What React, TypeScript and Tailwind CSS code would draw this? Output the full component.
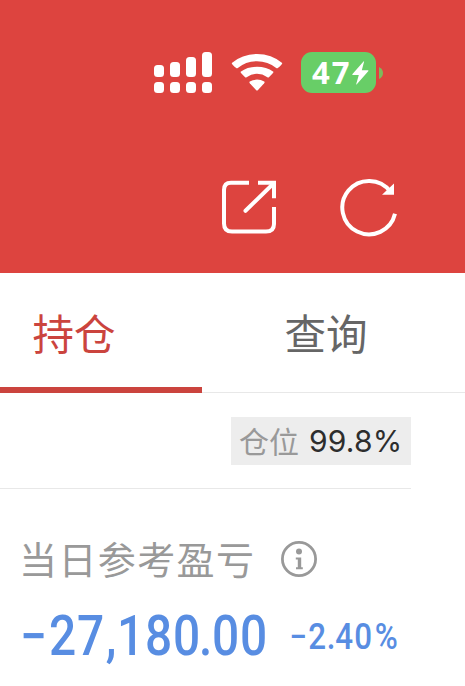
import React from "react";

const cjk = "font-['Noto_Sans_CJK_SC',sans-serif]";

function SignalIcon() {
  const bars = [
    { x: 0, y: 13, h: 12 },
    { x: 16, y: 10, h: 15 },
    { x: 32, y: 5, h: 20 },
    { x: 48, y: 0, h: 25 },
  ];
  return (
    <svg width="58" height="41" viewBox="0 0 58 41" fill="white">
      {bars.map((b) => (
        <g key={b.x}>
          <rect x={b.x} y={b.y} width="10" height={b.h} rx="3.5" />
          <rect x={b.x} y="30" width="10" height="11" rx="3.5" />
        </g>
      ))}
    </svg>
  );
}

function WifiIcon() {
  return (
    <svg width="52" height="39" viewBox="0 1 52 39" fill="white">
      <path d="M.8 11Q11.5 2 26 2T51.2 11Q51.6 11.7 46.8 16.1Q46 16.5 45.2 16Q37 9.2 26 9.2T6.8 16Q6 16.5 5.2 16.1Q.4 11.7 .8 11Z" />
      <path d="M9.6 19.8Q16.5 14.8 26 14.8T42.4 19.8Q43 20.6 37.9 25.2Q37.2 25.7 36.4 25.2Q31.5 21.8 26 21.8T15.6 25.2Q14.8 25.7 14.1 25.2Q9 20.6 9.6 19.8Z" />
      <path d="M18.8 29.6Q22 27.6 26 27.6T33.2 29.6Q34 30.3 33.2 31.2L27 37.9Q26 38.9 25 37.9L18.8 31.2Q18 30.3 18.8 29.6Z" />
    </svg>
  );
}

function Battery() {
  return (
    <div className="flex items-center gap-[3px]">
      <div className="flex h-[41px] w-[75px] items-center rounded-[11px] bg-[#68ce67] pl-[11px] text-white">
        <span className="w-[40px] font-['Noto_Sans',sans-serif] text-[31px] leading-[41px] font-bold tracking-[2px]">47</span>
        <svg width="17" height="24" viewBox="0 0 17 24" fill="white">
          <path d="M11.5.5Q12.4-.3 12 .9L9.8 9.2H15.8Q17 9.3 16.2 10.3L4.8 23.2Q3.9 24 4.3 22.8L6.8 14H.9Q-.2 13.9.5 12.9Z" />
        </svg>
      </div>
      <svg width="4" height="12" viewBox="0 0 4 12" fill="#7db95b"><path d="M0 0Q4 2 4 6T0 12Z" /></svg>
    </div>
  );
}

function ShareIcon() {
  return (
    <svg width="58" height="58" viewBox="0 0 58 58" fill="none" stroke="white" strokeWidth="4">
      <path d="M29 4.8H11Q4 4.8 4 12V45.5Q4 53.5 12 53.5H46Q54 53.5 54 46V29" />
      <path d="M38 4.8H54V20.3" />
      <path d="M53 6L25.5 32.8" strokeLinecap="round" />
    </svg>
  );
}

function RefreshIcon() {
  return (
    <svg width="60" height="60" viewBox="0 0 60 60" fill="none" stroke="white" strokeWidth="4">
      <path d="M57 36.8A26.7 26.7 0 1 1 52.3 14.5" />
      <path d="M56 6.5V17.8H44Z" fill="white" stroke="none" />
    </svg>
  );
}

function InfoIcon() {
  return (
    <svg width="36" height="36" viewBox="0 0 36 36" fill="none">
      <circle cx="18" cy="18" r="16.6" stroke="#999" strokeWidth="2.8" />
      <circle cx="18" cy="10.5" r="3" fill="#999" />
      <path d="M14.8 16.5H20.2V26.3H21.8V28.3H15V26.3H16.8V18.5H14.8Z" fill="#999" />
    </svg>
  );
}

type Cell = [string, string];

const amount: Cell[] = [
  ["−", "w-[29px]"],
  ["2", "w-[28.5px]"],
  ["7", "w-[28px]"],
  [",", "w-[13px]"],
  ["1", "w-[27px]"],
  ["8", "w-[28px]"],
  ["0", "w-[27.5px]"],
  [".", "w-[11.5px]"],
  ["0", "w-[28px]"],
  ["0", "w-[28px]"],
];

const percent: Cell[] = [
  ["−", "w-[18.5px]"],
  ["2", "w-[20px]"],
  [".", "w-[7px]"],
  ["4", "w-[19.5px]"],
  ["0", "w-[19.5px]"],
  ["%", "w-[27px]"],
];

function Figures({ cells }: { cells: Cell[] }) {
  return (
    <span className="flex">
      {cells.map(([char, width], i) => (
        <span key={i} className={`flex shrink-0 justify-center ${width}`}>
          <span className="scale-x-[.87]">{char}</span>
        </span>
      ))}
    </span>
  );
}

export default function App() {
  return (
    <div className={`h-[686px] w-[465px] overflow-hidden bg-white ${cjk}`}>
      <header className="h-[273px] bg-[#dd443f] pt-[52px]">
        <div className="flex h-[41px] items-center pl-[154px]">
          <SignalIcon />
          <div className="ml-[19px]"><WifiIcon /></div>
          <div className="ml-[18px]"><Battery /></div>
        </div>
        <div className="mt-[84px] flex items-center gap-[60px] pl-[220px]">
          <ShareIcon />
          <RefreshIcon />
        </div>
      </header>
      <nav className="flex h-[120px] border-b border-[#e8e8e8] text-[41.5px] leading-[118px]">
        <div className="h-[120px] w-[202px] border-b-[6px] border-[#cb443e] pl-[32.5px] text-[#cb443e]">持仓</div>
        <div className="pl-[82.5px] text-[#666]">查询</div>
      </nav>
      <section className="mr-[54px] flex h-[96px] justify-end border-b border-[#e8e8e8] pt-6">
        <div className="flex h-12 w-[180px] bg-[#ededed] pl-[8px] whitespace-nowrap">
          <span className="w-[70px] text-[30px] leading-[46px] text-[#999]">仓位</span>
          <span className="font-[Inter,sans-serif] text-[30px] leading-[48px] tracking-[.2px] text-[#2d2d2d]">99.8%</span>
        </div>
      </section>
      <section className="pl-[19px]">
        <div className="mt-[40px] flex h-[60px] items-center text-[#999]">
          <span className="mb-[2px] w-[262px] text-[38px] leading-[58px] tracking-[1.4px] whitespace-nowrap">当日参考盈亏</span>
          <InfoIcon />
        </div>
        <div className="mt-[15px] flex items-start font-[Roboto,sans-serif] font-medium whitespace-nowrap text-[#588de2]">
          <div className="w-[269.5px] text-[55px] leading-[64px]">
            <Figures cells={amount} />
          </div>
          <div className="text-[36px] leading-[66px]">
            <Figures cells={percent} />
          </div>
        </div>
      </section>
    </div>
  );
}
